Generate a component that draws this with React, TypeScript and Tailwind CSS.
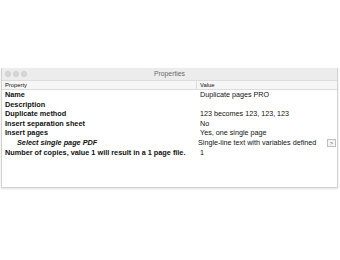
import React from 'react';

const rows: { label: string; value: string; sub?: boolean; editor?: boolean }[] = [
  { label: 'Name', value: 'Duplicate pages PRO' },
  { label: 'Description', value: '' },
  { label: 'Duplicate method', value: '123 becomes 123, 123, 123' },
  { label: 'Insert separation sheet', value: 'No' },
  { label: 'Insert pages', value: 'Yes, one single page' },
  { label: 'Select single page PDF', value: 'Single-line text with variables defined', sub: true, editor: true },
  { label: 'Number of copies, value 1 will result in a 1 page file.', value: '1' },
];

const App: React.FC = () => {
  return (
    <div className="w-[340px] h-[260px] bg-white pt-[68px] pl-[1px] pr-[2px] font-['Liberation_Sans',Arial,sans-serif] text-[#111]">
      <div className="h-[120px] border-x border-b border-[#d2d2d2] bg-white flex flex-col shadow-[0_1px_2px_rgba(0,0,0,0.12)]">
        <div className="relative h-[12px] bg-[#ececec] flex items-center pl-[3px] gap-[2px]">
          <span className="w-[6px] h-[6px] rounded-full bg-[#d8d8d8] border border-[#cdcdcd]" />
          <span className="w-[6px] h-[6px] rounded-full bg-[#d8d8d8] border border-[#cdcdcd]" />
          <span className="w-[6px] h-[6px] rounded-full bg-[#d8d8d8] border border-[#cdcdcd]" />
          <div className="absolute inset-0 flex items-center justify-center text-[6.8px] text-[#6b6b6b]">Properties</div>
        </div>
        <div className="h-[10px] grid grid-cols-[195px_1fr] bg-[#f6f6f6] border-y border-[#dcdcdc] text-[5.8px] leading-[8px]">
          <div className="pl-[3px] border-r border-[#dcdcdc]">Property</div>
          <div className="pl-[3px]">Value</div>
        </div>
        {rows.map((r) => (
          <div key={r.label} className="h-[9.6px] grid grid-cols-[195px_1fr] leading-[9.6px]">
            <div className={`font-bold whitespace-nowrap text-[7.3px] ${r.sub ? 'italic pl-[15px]' : 'pl-[3px]'}`}>{r.label}</div>
            <div className={`flex items-center whitespace-nowrap text-[7.2px] ${r.editor ? 'pl-[1px]' : 'pl-[3px]'}`}>
              <span className="flex-1">{r.value}</span>
              {r.editor && (
                <span className="w-[9px] h-[8px] mr-[1px] border border-[#bdbdbd] bg-[#f4f4f4] text-[5px] leading-[6px] text-center text-[#555]">&gt;</span>
              )}
            </div>
          </div>
        ))}
      </div>
    </div>
  );
};

export default App;
